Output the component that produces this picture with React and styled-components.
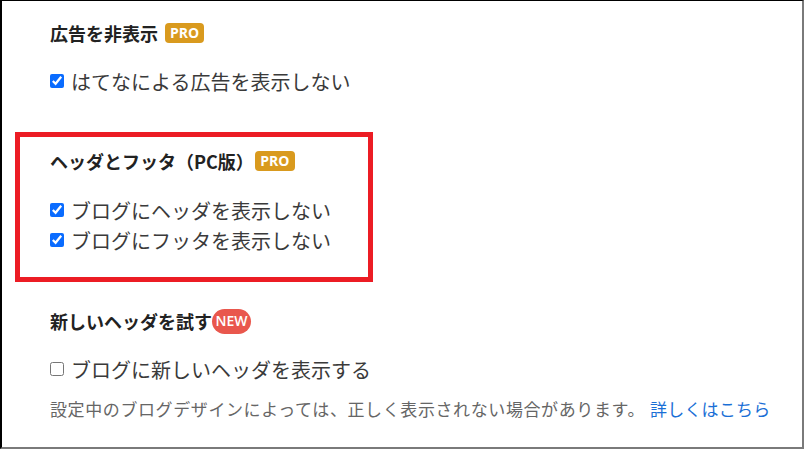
import React from "react";
import styled, { createGlobalStyle } from "styled-components";

const Global = createGlobalStyle`
  html, body { margin: 0; padding: 0; background: #fff; }
  body { font-family: "Noto Sans CJK JP", "Noto Sans", sans-serif; }
  * { box-sizing: border-box; }
`;

const Frame = styled.div`
  width: 804px;
  height: 449px;
  border-top: 1px solid #000;
  border-left: 2px solid #000;
  border-right: 2px solid #7a7a7a;
  border-bottom: 2px solid #7a7a7a;
  padding: 0 0 0 13px;
  overflow: hidden;
  color: #333;
`;

const Section = styled.section`
  width: ${(p) => (p.$highlight ? "358px" : "auto")};
  padding: ${(p) => p.$pad};
  margin: ${(p) => p.$margin};
  border: ${(p) => (p.$highlight ? "5px solid #ec1c24" : "5px solid transparent")};
`;

const Heading = styled.h3`
  display: flex;
  align-items: center;
  margin: 0;
  height: 24px;
  font-size: 18px;
  font-weight: 700;
  color: #222;
  white-space: nowrap;
  line-height: 24px;
`;

const Badge = styled.span`
  display: inline-flex;
  align-items: center;
  justify-content: center;
  margin-left: ${(p) => p.$gap}px;
  width: ${(p) => p.$w}px;
  height: ${(p) => p.$h}px;
  border-radius: ${(p) => p.$r}px;
  background: ${(p) => p.$bg};
  color: #fff;
  font-family: "Open Sans", "Noto Sans", sans-serif;
  font-size: 14px;
  font-weight: ${(p) => p.$weight};
  line-height: 1;
`;

const Options = styled.div`
  margin-top: ${(p) => p.$top}px;
  display: flex;
  flex-direction: column;
`;

const Row = styled.label`
  display: flex;
  align-items: center;
  height: 30px;
  font-size: 20px;
  color: #3a3a3a;
  white-space: nowrap;
`;

const Check = styled.input.attrs({ type: "checkbox" })`
  width: 14px;
  height: 14px;
  margin: 0 7px 0 0;
  accent-color: #0a6cff;
`;

const Note = styled.p`
  margin: 13px 0 0;
  font-size: 17px;
  line-height: 24px;
  letter-spacing: 0.6px;
  color: #666;
  white-space: nowrap;
`;

const Link = styled.a`
  color: #1a6fd6;
  text-decoration: none;
  margin-left: 5px;
  letter-spacing: 0.2px;
`;

export default function App() {
  return (
    <>
      <Global />
      <Frame>
        <Section $pad="15px 0 0 30px" $margin="0">
          <Heading>
            広告を非表示
            <Badge $gap={7} $w={39} $h={20} $r={4} $bg="#d99a1e" $weight={700}>
              PRO
            </Badge>
          </Heading>
          <Options $top={21}>
            <Row>
              <Check defaultChecked />
              はてなによる広告を表示しない
            </Row>
          </Options>
        </Section>

        <Section $highlight $pad="12px 0 22px 30px" $margin="31px 0 0">
          <Heading>
            ヘッダとフッタ（PC版）
            <Badge $gap={1} $w={40} $h={20} $r={4} $bg="#d99a1e" $weight={700}>
              PRO
            </Badge>
          </Heading>
          <Options $top={22}>
            <Row>
              <Check defaultChecked />
              ブログにヘッダを表示しない
            </Row>
            <Row>
              <Check defaultChecked />
              ブログにフッタを表示しない
            </Row>
          </Options>
        </Section>

        <Section $pad="22px 0 0 30px" $margin="0">
          <Heading>
            新しいヘッダを試す
            <Badge $gap={0} $w={39} $h={25} $r={13} $bg="#e9574d" $weight={600}>
              NEW
            </Badge>
          </Heading>
          <Options $top={21}>
            <Row>
              <Check />
              ブログに新しいヘッダを表示する
            </Row>
          </Options>
          <Note>
            設定中のブログデザインによっては、正しく表示されない場合があります。
            <Link href="#">詳しくはこちら</Link>
          </Note>
        </Section>
      </Frame>
    </>
  );
}
